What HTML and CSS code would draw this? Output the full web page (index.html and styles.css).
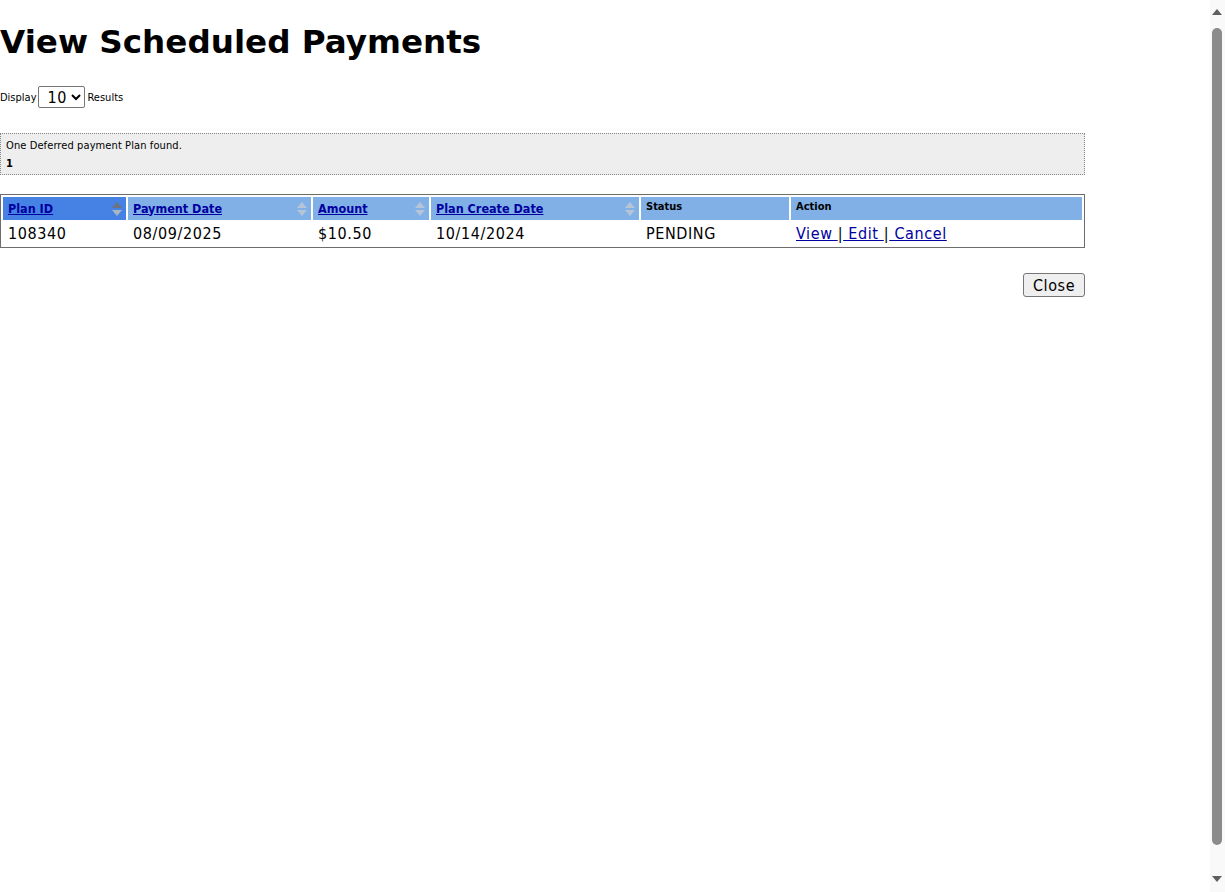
FILE: index.html
```html
<!DOCTYPE html>
<html>
<head>
<meta charset="utf-8">
<title>View Scheduled Payments</title>
<link rel="stylesheet" href="styles.css">
</head>
<body>
<div class="page">
  <h1 class="title">View Scheduled Payments</h1>
  <div class="display">
    Display
    <select class="count"><option>10</option><option>25</option><option>50</option></select>
    Results
  </div>
  <div class="notice">
    <div class="notice-text">One Deferred payment Plan found.</div>
    <div class="pager">1</div>
  </div>
  <table class="grid">
    <thead>
      <tr>
        <th class="sortable sorted w-id"><a href="#">Plan ID</a><span class="sort"><span class="up"></span><span class="down"></span></span></th>
        <th class="sortable w-date"><a href="#">Payment Date</a><span class="sort"><span class="up"></span><span class="down"></span></span></th>
        <th class="sortable w-amt"><a href="#">Amount</a><span class="sort"><span class="up"></span><span class="down"></span></span></th>
        <th class="sortable w-create"><a href="#">Plan Create Date</a><span class="sort"><span class="up"></span><span class="down"></span></span></th>
        <th class="plain w-status">Status</th>
        <th class="plain">Action</th>
      </tr>
    </thead>
    <tbody>
      <tr>
        <td>108340</td>
        <td>08/09/2025</td>
        <td>$10.50</td>
        <td>10/14/2024</td>
        <td>PENDING</td>
        <td><a href="#">View </a>|<a href="#"> Edit </a>|<a href="#"> Cancel</a></td>
      </tr>
    </tbody>
  </table>
  <div class="actions">
    <button class="close" type="button">Close</button>
  </div>
</div>
<div class="scrollbar" aria-hidden="true">
  <span class="arrow-up"></span>
  <span class="thumb"></span>
  <span class="arrow-down"></span>
</div>
</body>
</html>
```
FILE: styles.css
```css
html, body {
  margin: 0;
  padding: 0;
  background: #fff;
}
body {
  font-family: "DejaVu Sans Condensed", "DejaVu Sans", sans-serif;
  color: #000;
}
.page {
  width: 1085px;
}
.title {
  font-family: "DejaVu Sans", Verdana, sans-serif;
  font-weight: bold;
  font-size: 32.6px;
  margin: 22px 0 24px 0;
  line-height: 40px;
}
.display {
  font-size: 11px;
  display: flex;
  align-items: center;
  gap: 2px;
  height: 22px;
}
.count {
  font-family: "DejaVu Sans Condensed", sans-serif;
  font-size: 16px;
  letter-spacing: 0.5px;
  width: 47px;
  height: 22px;
  padding: 0 0 0 4px;
  border: 1px solid #767676;
  border-radius: 2px;
  background: #fff;
  color: #000;
}
.notice {
  margin-top: 25px;
  background: #eeeeee;
  border: 1px dotted #888;
  padding: 4px 5px 2px 5px;
  font-size: 11px;
  height: 34px;
}
.notice-text {
  line-height: 16px;
  letter-spacing: 0.1px;
}
.pager {
  font-weight: bold;
  line-height: 20px;
}
.grid {
  margin-top: 19px;
  width: 1085px;
  table-layout: fixed;
  border: 1px solid #6d6d6d;
  border-spacing: 2px;
  font-size: 16px;
}
.grid th {
  box-sizing: border-box;
  background: #80b0e6;
  text-align: left;
  font-size: 11px;
  padding: 0 5px 0 5px;
  height: 23px;
  line-height: 18px;
  white-space: nowrap;
}
.grid th.sorted {
  background: #4582e4;
}
.grid th.sortable {
  position: relative;
  padding-right: 18px;
  padding-top: 1px;
}
.grid th a {
  font-size: 12.5px;
  color: #0000a0;
  font-weight: bold;
}
.grid th.plain {
  vertical-align: middle;
  padding-bottom: 3px;
}
.w-id { width: 123px; }
.w-date { width: 183px; }
.w-amt { width: 116px; }
.w-create { width: 208px; }
.w-status { width: 148px; }
.sort {
  position: absolute;
  right: 4px;
  top: 5px;
  display: flex;
  flex-direction: column;
  gap: 2px;
}
.sort .up {
  width: 0; height: 0;
  border-left: 5px solid transparent;
  border-right: 5px solid transparent;
  border-bottom: 6px solid #b7c4d6;
}
.sort .down {
  width: 0; height: 0;
  border-left: 5px solid transparent;
  border-right: 5px solid transparent;
  border-top: 6px solid #b7c4d6;
}
.sorted .sort .up { border-bottom-color: #6b7480; }
.sorted .sort .down { border-top-color: #a9b4c4; }
.grid td {
  box-sizing: border-box;
  padding: 0 5px;
  height: 23px;
  line-height: 20px;
  letter-spacing: 0.6px;
  white-space: nowrap;
}
.grid td a {
  color: #0000a0;
}
.actions {
  display: flex;
  justify-content: flex-end;
  margin-top: 25px;
}
.close {
  font-family: "DejaVu Sans Condensed", sans-serif;
  font-size: 16px;
  letter-spacing: 0.6px;
  width: 62px;
  padding: 0;
  height: 24px;
  border: 1px solid #767676;
  border-radius: 3px;
  background: #efefef;
  color: #000;
}
.scrollbar {
  position: fixed;
  top: 0;
  right: 0;
  width: 15px;
  height: 100%;
  background: #f9f9f9;
}
.arrow-up {
  position: absolute;
  top: 9px;
  left: 2px;
  width: 0; height: 0;
  border-left: 5px solid transparent;
  border-right: 5px solid transparent;
  border-bottom: 6px solid #5f5f5f;
}
.arrow-down {
  position: absolute;
  bottom: 10px;
  left: 2px;
  width: 0; height: 0;
  border-left: 5px solid transparent;
  border-right: 5px solid transparent;
  border-top: 6px solid #5f5f5f;
}
.thumb {
  position: absolute;
  top: 28px;
  left: 2px;
  width: 10px;
  height: 817px;
  background: #8b8b8b;
  border-radius: 5px;
}
```
